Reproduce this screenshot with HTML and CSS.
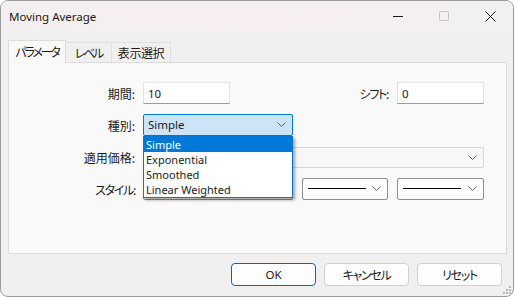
FILE: index.html
```html
<!DOCTYPE html>
<html lang="ja">
<head>
  <meta charset="UTF-8" />
  <title>Moving Average</title>
  <link rel="stylesheet" href="styles.css">
</head>
<body>

  <div class="window">
    <div class="titlebar">
      <span class="title">Moving Average</span>
      <div class="caption">
        <span class="cap-btn">
          <svg width="10" height="10" viewBox="0 0 10 10"><path d="M0 5.5H10" stroke="#1a1a1a" stroke-width="1"/></svg>
        </span>
        <span class="cap-btn">
          <svg width="10" height="10" viewBox="0 0 10 10"><rect x="0.5" y="0.5" width="9" height="9" rx="1" fill="none" stroke="#c4c4c4"/></svg>
        </span>
        <span class="cap-btn">
          <svg width="11" height="11" viewBox="0 0 11 11"><path d="M0.5 0.5L10.5 10.5M10.5 0.5L0.5 10.5" stroke="#1a1a1a" stroke-width="1"/></svg>
        </span>
      </div>
    </div>

    <div class="content">
      <div class="tabs">
        <div class="tab active ja kana">パラメータ</div>
        <div class="tab ja kana">レベル</div>
        <div class="tab ja">表示選択</div>
      </div>

      <div class="panel">
        <label class="lbl ja">期間:</label>
        <div class="ctl">
          <div class="field w87">10</div>
          <span class="lbl-inline ja kana-s">シフト:</span>
          <div class="field w87">0</div>
        </div>

        <label class="lbl ja">種別:</label>
        <div class="ctl">
          <div class="combo open w150">
            <span>Simple</span>
            <svg class="chev" width="9" height="5" viewBox="0 0 9 5"><path d="M0.5 0.5L4.5 4.5L8.5 0.5" fill="none" stroke="#606060"/></svg>
          </div>
        </div>

        <label class="lbl ja">適用価格:</label>
        <div class="ctl">
          <div class="combo disabled grow">
            <span></span>
            <svg class="chev" width="9" height="5" viewBox="0 0 9 5"><path d="M0.5 0.5L4.5 4.5L8.5 0.5" fill="none" stroke="#606060"/></svg>
          </div>
        </div>

        <label class="lbl ja kana-s">スタイル:</label>
        <div class="ctl">
          <div class="combo line w150">
            <span class="stroke"></span>
            <svg class="chev" width="9" height="5" viewBox="0 0 9 5"><path d="M0.5 0.5L4.5 4.5L8.5 0.5" fill="none" stroke="#606060"/></svg>
          </div>
          <div class="combo line w86">
            <span class="stroke"></span>
            <svg class="chev" width="9" height="5" viewBox="0 0 9 5"><path d="M0.5 0.5L4.5 4.5L8.5 0.5" fill="none" stroke="#606060"/></svg>
          </div>
          <div class="combo line w87">
            <span class="stroke"></span>
            <svg class="chev" width="9" height="5" viewBox="0 0 9 5"><path d="M0.5 0.5L4.5 4.5L8.5 0.5" fill="none" stroke="#606060"/></svg>
          </div>
        </div>
      </div>

      <div class="buttons">
        <button class="btn default">OK</button>
        <button class="btn ja kana-s">キャンセル</button>
        <button class="btn ja kana-s">リセット</button>
      </div>
    </div>

    <ul class="dropdown">
      <li class="selected">Simple</li>
      <li>Exponential</li>
      <li>Smoothed</li>
      <li>Linear Weighted</li>
    </ul>

    <svg class="grip" width="8" height="8" viewBox="0 0 8 8">
      <rect x="6" y="0" width="2" height="2" fill="#b8b8b8"/>
      <rect x="3" y="3" width="2" height="2" fill="#b8b8b8"/>
      <rect x="6" y="3" width="2" height="2" fill="#b8b8b8"/>
      <rect x="0" y="6" width="2" height="2" fill="#b8b8b8"/>
      <rect x="3" y="6" width="2" height="2" fill="#b8b8b8"/>
      <rect x="6" y="6" width="2" height="2" fill="#b8b8b8"/>
    </svg>
  </div>

</body>
</html>
```

FILE: styles.css
```css
body {
  margin: 0;
  background-color: #ffffff;
  font-family: "Noto Sans", "Noto Sans CJK JP", sans-serif;
  font-size: 11.5px;
  color: #1a1a1a;
}

.ja {
  font-family: "Noto Sans CJK JP", sans-serif;
  font-feature-settings: "palt" 1;
}

/* Yu Gothic UI kana are narrower than Noto's full-width ones */
.kana {
  letter-spacing: -2.2px;
}

.kana-s {
  letter-spacing: -1.3px;
}

.window {
  position: relative;
  width: 514px;
  height: 297px;
  box-sizing: border-box;
  border: 1px solid #9a9a9a;
  border-radius: 8px;
  background-color: #f0f0f0;
  overflow: hidden;
}

.titlebar {
  height: 30px;
  display: flex;
  align-items: center;
  justify-content: space-between;
  background: linear-gradient(90deg, #f3eff1 0%, #f6eef0 50%, #f2f0f2 100%);
}

.title {
  padding-left: 8px;
  color: #1a1a1a;
}

.caption {
  display: flex;
  height: 100%;
}

.cap-btn {
  width: 46px;
  display: flex;
  align-items: center;
  justify-content: center;
}

.content {
  padding: 9px 6px 0 7px;
}

.tabs {
  display: flex;
  align-items: flex-end;
  height: 22px;
}

.tab {
  height: 20px;
  box-sizing: border-box;
  border: 1px solid #e0e0e0;
  border-bottom: none;
  background-color: #f0f0f0;
  display: flex;
  align-items: center;
  justify-content: center;
  white-space: nowrap;
  margin-left: -1px;
  font-size: 12px;
}

.tab:nth-child(2) {
  width: 47px;
}

.tab:nth-child(3) {
  width: 60px;
  letter-spacing: -0.4px;
}

.tab.active {
  height: 23px;
  width: 58px;
  margin-left: 0;
  margin-bottom: -1px;
  background-color: #f9f9f9;
  border-color: #dcdcdc;
  position: relative;
  z-index: 1;
  padding-bottom: 2px;
}

.panel {
  height: 192px;
  box-sizing: border-box;
  border: 1px solid #dcdcdc;
  background-color: #f9f9f9;
  padding-top: 19px;
  display: grid;
  grid-template-columns: 126px 341px;
  grid-auto-rows: 22px;
  column-gap: 8px;
  row-gap: 10px;
  align-content: start;
}

.lbl {
  display: flex;
  align-items: center;
  justify-content: flex-end;
  white-space: nowrap;
  font-size: 12px;
}

.ctl {
  display: flex;
  gap: 9px;
}

.lbl-inline {
  flex: 1;
  display: flex;
  align-items: center;
  justify-content: flex-end;
  font-size: 12px;
}

.field {
  height: 22px;
  box-sizing: border-box;
  padding: 0 4px;
  border: 1px solid #e3e3e3;
  border-bottom-color: #9c9c9c;
  background-color: #ffffff;
  display: flex;
  align-items: center;
}

.w87 { width: 87px; }
.w86 { width: 86px; }
.w150 { width: 150px; }
.grow { flex: 1; }

.combo {
  height: 22px;
  box-sizing: border-box;
  padding: 0 6px 1px 4px;
  border: 1px solid #8f8f8f;
  border-radius: 2px;
  background-color: #fdfdfd;
  display: flex;
  align-items: center;
  justify-content: space-between;
}

.combo.open {
  background-color: #cce4f7;
  border-color: #0078d7;
}

.combo.disabled {
  height: 21px;
  margin-top: 1px;
  border-color: #d6d6d6;
  background-color: #f7f7f7;
}

.combo.line {
  padding-left: 5px;
}

.stroke {
  display: block;
  width: 58px;
  height: 1px;
  background-color: #000000;
}

.combo.w150 .stroke {
  width: 120px;
}

.chev {
  flex: none;
}

.buttons {
  display: flex;
  justify-content: flex-end;
  gap: 8px;
  padding: 9px 5px 0 0;
}

.btn {
  width: 85px;
  height: 23px;
  box-sizing: border-box;
  border: 1px solid #d0d0d0;
  border-radius: 4px;
  background-color: #fdfdfd;
  font-family: "Noto Sans", "Noto Sans CJK JP", sans-serif;
  font-size: 11.5px;
  color: #1a1a1a;
  padding: 0;
}

.btn.ja {
  font-family: "Noto Sans CJK JP", sans-serif;
  font-size: 12px;
}

.btn.default {
  border-color: #0067c0;
}

.dropdown {
  position: absolute;
  left: 142px;
  top: 135px;
  width: 150px;
  margin: 0;
  padding: 0;
  list-style: none;
  box-sizing: border-box;
  border: 1px solid #0078d7;
  background-color: #ffffff;
  box-shadow: 2px 2px 3px rgba(0, 0, 0, 0.35);
  z-index: 5;
  font-size: 11px;
}

.dropdown li {
  height: 15px;
  line-height: 15px;
  padding-left: 2px;
  overflow: hidden;
}

.dropdown li.selected {
  background-color: #0078d7;
  color: #ffffff;
}

.grip {
  position: absolute;
  right: 2px;
  bottom: 2px;
}
```
